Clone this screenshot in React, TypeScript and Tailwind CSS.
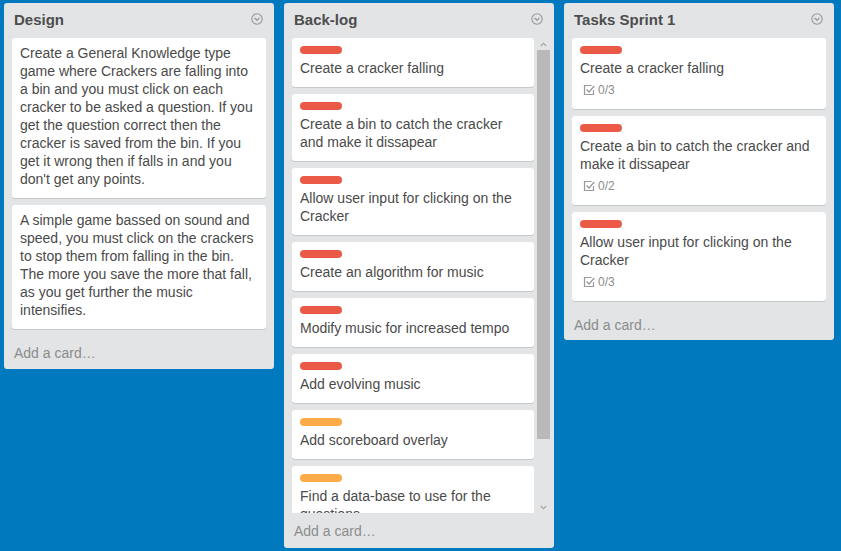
import React from "react";

type Card = { text: string; label?: "red" | "orange"; badge?: string };

const design: Card[] = [
  {
    text: "Create a General Knowledge type game where Crackers are falling into a bin and you must click on each cracker to be asked a question. If you get the question correct then the cracker is saved from the bin. If you get it wrong then if falls in and you don't get any points.",
  },
  {
    text: "A simple game bassed on sound and speed, you must click on the crackers to stop them from falling in the bin. The more you save the more that fall, as you get further the music intensifies.",
  },
];

const backlog: Card[] = [
  { text: "Create a cracker falling", label: "red" },
  { text: "Create a bin to catch the cracker and make it dissapear", label: "red" },
  { text: "Allow user input for clicking on the Cracker", label: "red" },
  { text: "Create an algorithm for music", label: "red" },
  { text: "Modify music for increased tempo", label: "red" },
  { text: "Add evolving music", label: "red" },
  { text: "Add scoreboard overlay", label: "orange" },
  { text: "Find a data-base to use for the questions", label: "orange" },
];

const sprint: Card[] = [
  { text: "Create a cracker falling", label: "red", badge: "0/3" },
  { text: "Create a bin to catch the cracker and make it dissapear", label: "red", badge: "0/2" },
  { text: "Allow user input for clicking on the Cracker", label: "red", badge: "0/3" },
];

function MenuIcon() {
  return (
    <svg width="12" height="12" viewBox="0 0 12 12" className="block">
      <circle cx="6" cy="6" r="5.2" fill="none" stroke="#999" strokeWidth="1.1" />
      <path d="M3.6 5 L6 7.3 L8.4 5" fill="none" stroke="#999" strokeWidth="1.2" />
    </svg>
  );
}

function CheckIcon() {
  return (
    <svg width="12" height="12" viewBox="0 0 12 12" className="block">
      <path d="M8.5 1.5 H1.5 V10.5 H10.5 V6" fill="none" stroke="#999" strokeWidth="1.2" />
      <path d="M3.5 5.5 L6 8 L11.2 2" fill="none" stroke="#999" strokeWidth="1.3" />
    </svg>
  );
}

function CardView({ card }: { card: Card }) {
  const hasLabel = !!card.label;
  return (
    <div
      className={
        "shrink-0 bg-white rounded-[3px] shadow-[0_1px_0_#c4c9cc] px-[8px] " +
        (hasLabel ? "pt-[8px] pb-[10px]" : "pt-[6px] pb-[10px]")
      }
    >
      {card.label === "red" && <div className="w-[42px] h-[8px] rounded-[4px] bg-[#eb5a46] mb-[5px]" />}
      {card.label === "orange" && <div className="w-[42px] h-[8px] rounded-[4px] bg-[#ffab4a] mb-[5px]" />}
      <div className="text-[14px] leading-[18px] text-[#4a4a4a]">{card.text}</div>
      {card.badge && (
        <div className="mt-[4px] h-[18px] flex items-center pl-[3px] gap-[3px]">
          <CheckIcon />
          <span className="text-[12px] leading-[18px] text-[#8c8c8c]">{card.badge}</span>
        </div>
      )}
    </div>
  );
}

function Header({ title }: { title: string }) {
  return (
    <div className="h-[35px] flex items-start justify-between pl-[10px] pr-[11px] pt-[7px]">
      <span className="text-[15px] leading-[20px] font-bold text-[#4d4d4d]">{title}</span>
      <div className="pt-[3px]">
        <MenuIcon />
      </div>
    </div>
  );
}

function AddCard({ className }: { className: string }) {
  return <div className={"px-[10px] text-[14px] leading-[20px] text-[#8c8c8c] " + className}>Add a card…</div>;
}

export default function App() {
  return (
    <div className="w-[841px] h-[551px] bg-[#0079bf] flex items-start gap-[10px] pl-[4px] pt-[3px] overflow-hidden font-['Liberation_Sans',Arial,sans-serif]">
      {/* Design */}
      <div className="w-[270px] shrink-0 bg-[#e2e4e6] rounded-[3px] flex flex-col">
        <Header title="Design" />
        <div className="px-[8px] flex flex-col gap-[7px]">
          {design.map((c, i) => (
            <CardView key={i} card={c} />
          ))}
        </div>
        <AddCard className="pt-[14px] pb-[6px]" />
      </div>

      {/* Back-log */}
      <div className="w-[270px] shrink-0 bg-[#e2e4e6] rounded-[3px] flex flex-col">
        <Header title="Back-log" />
        <div className="h-[475px] flex pl-[8px] pr-[3px]">
          <div className="w-[242px] h-full overflow-hidden flex flex-col gap-[7px]">
            {backlog.map((c, i) => (
              <CardView key={i} card={c} />
            ))}
          </div>
          <div className="ml-[3px] w-[13px] h-full flex flex-col">
            <div className="h-[12px] flex items-center justify-center">
              <svg width="7" height="5" viewBox="0 0 7 5" className="block">
                <path d="M0.8 4 L3.5 1.2 L6.2 4" fill="none" stroke="#a3a3a3" strokeWidth="1.1" />
              </svg>
            </div>
            <div className="h-[389px] bg-[#b9b9b9]" />
            <div className="flex-1" />
            <div className="h-[12px] flex items-center justify-center">
              <svg width="7" height="5" viewBox="0 0 7 5" className="block">
                <path d="M0.8 1 L3.5 3.8 L6.2 1" fill="none" stroke="#a3a3a3" strokeWidth="1.1" />
              </svg>
            </div>
          </div>
        </div>
        <AddCard className="pt-[8px] pb-[7px]" />
      </div>

      {/* Tasks Sprint 1 */}
      <div className="w-[270px] shrink-0 bg-[#e2e4e6] rounded-[3px] flex flex-col">
        <Header title="Tasks Sprint 1" />
        <div className="px-[8px] flex flex-col gap-[7px]">
          {sprint.map((c, i) => (
            <CardView key={i} card={c} />
          ))}
        </div>
        <AddCard className="pt-[14px] pb-[5px]" />
      </div>
    </div>
  );
}
